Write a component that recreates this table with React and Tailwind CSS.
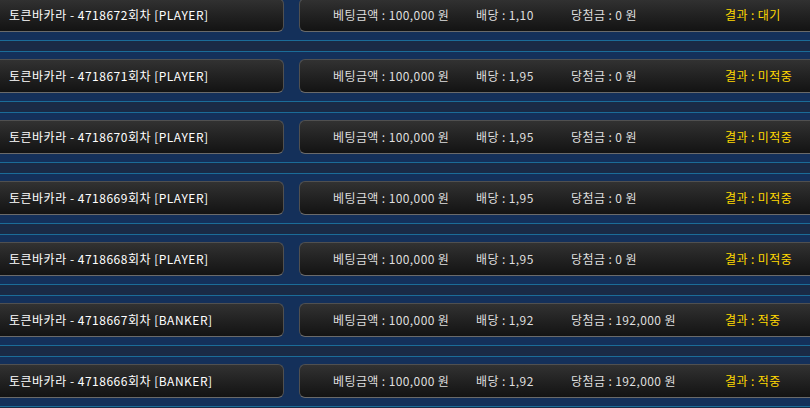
import React from "react";

const rows = [
  { id: "4718672", side: "PLAYER", odds: "1,10", win: "0", result: "대기" },
  { id: "4718671", side: "PLAYER", odds: "1,95", win: "0", result: "미적중" },
  { id: "4718670", side: "PLAYER", odds: "1,95", win: "0", result: "미적중" },
  { id: "4718669", side: "PLAYER", odds: "1,95", win: "0", result: "미적중" },
  { id: "4718668", side: "PLAYER", odds: "1,95", win: "0", result: "미적중" },
  { id: "4718667", side: "BANKER", odds: "1,92", win: "192,000", result: "적중" },
  { id: "4718666", side: "BANKER", odds: "1,92", win: "192,000", result: "적중" },
];

function Separator() {
  return (
    <div className="flex h-[27px] flex-col">
      <div className="h-[8px] bg-[#14305a]" />
      <div className="h-[1px] bg-[#1b6c98]" />
      <div className="h-[10px] bg-[#1a2a45]" />
      <div className="h-[1px] bg-[#1b6c98]" />
      <div className="h-[7px] bg-[#14305a]" />
    </div>
  );
}

function Row({ r }) {
  return (
    <div className="flex h-[34px] bg-[#14305a]">
      <div className="flex h-full w-[284px] shrink-0 items-center rounded-r-[6px] border border-l-0 border-[#505050] border-b-[#6a6a6a] bg-gradient-to-b from-[#323232] to-[#131313] pl-[9px] text-[12px] tracking-[0.5px] text-white">
        토큰바카라 - {r.id}회차 [{r.side}]
      </div>
      <div className="ml-[15px] -mr-[10px] flex h-full flex-1 items-center rounded-l-[6px] border border-r-0 border-[#505050] border-b-[#6a6a6a] bg-gradient-to-b from-[#323232] to-[#131313] pl-[33px] text-[12px] tracking-[0.4px] text-[#dedede]">
        <div className="w-[143px] shrink-0">베팅금액 : 100,000 원</div>
        <div className="w-[95px] shrink-0">배당 : {r.odds}</div>
        <div className="w-[154px] shrink-0">당첨금 : {r.win} 원</div>
        <div className="text-[#ffd800]">결과 : {r.result}</div>
      </div>
    </div>
  );
}

export default function App() {
  return (
    <div
      className="h-[408px] w-[810px] overflow-hidden bg-[#14305a]"
      style={{ fontFamily: '"Noto Sans CJK KR", "Noto Sans", sans-serif' }}
    >
      <div className="-mt-[2px] flex flex-col">
        {rows.map((r, i) => (
          <React.Fragment key={r.id}>
            <Row r={r} />
            <Separator />
          </React.Fragment>
        ))}
      </div>
    </div>
  );
}
